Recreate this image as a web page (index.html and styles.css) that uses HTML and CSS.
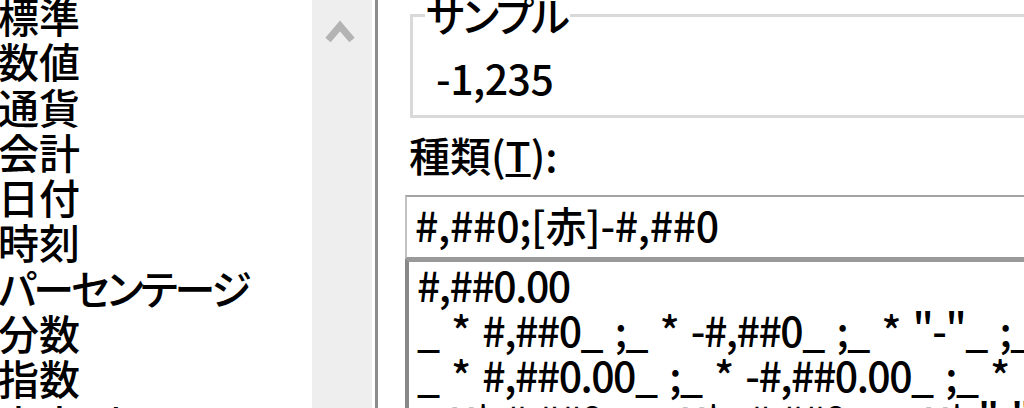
FILE: index.html
```html
<!DOCTYPE html>
<html lang="ja">
<head>
<meta charset="utf-8">
<title>セルの書式設定</title>
<link rel="stylesheet" href="styles.css">
</head>
<body>
<div class="dialog">
  <div class="category">
    <ul class="cat-list">
      <li>標準</li>
      <li>数値</li>
      <li>通貨</li>
      <li>会計</li>
      <li>日付</li>
      <li>時刻</li>
      <li class="kana">パーセンテージ</li>
      <li>分数</li>
      <li>指数</li>
      <li>文字列</li>
    </ul>
    <div class="vscroll">
      <svg class="arrow" width="60" height="50" viewBox="0 0 60 50"><polyline points="16,40 28,26 40,40" fill="none" stroke="#b3b3b3" stroke-width="7" stroke-linejoin="miter"/></svg>
    </div>
    <div class="cat-edge"></div>
  </div>
  <div class="format-panel">
    <div class="sample">
      <span class="legend">サンプル</span>
      <div class="sample-value">-1,235</div>
    </div>
    <div class="type-label">種類(<u>T</u>):</div>
    <div class="type-input">#,##0;[赤]-#,##0</div>
    <ul class="type-list">
      <li>#,##0.00</li>
      <li>_ * #,##0_ ;_ * -#,##0_ ;_ * "-"_ ;_ @_ </li>
      <li>_ * #,##0.00_ ;_ * -#,##0.00_ ;_ * "-"??_ ;_ @_ </li>
      <li>_ ¥* #,##0_ ;_ ¥* -#,##0_ ;_ ¥* "-"_ ;_ @_ </li>
    </ul>
  </div>
</div>
</body>
</html>
```

FILE: styles.css
```css
html, body {
  margin: 0;
  padding: 0;
  background: #ffffff;
  overflow: hidden;
}

body {
  font-family: "Noto Sans CJK JP", "Noto Sans", sans-serif;
  font-size: 41px;
  font-weight: 500;
  color: #000000;
}

.dialog {
  display: flex;
  height: 408px;
  overflow: hidden;
}

/* ---------- category list (left) ---------- */
.category {
  display: flex;
  flex: none;
  width: 378px;
  height: 408px;
}

.cat-list {
  list-style: none;
  flex: none;
  width: 314px;
  margin: -7px 0 0 -2px;
  padding: 0;
  line-height: 45.3px;
  white-space: nowrap;
}

.cat-list .kana {
  font-feature-settings: "palt";
  letter-spacing: -3px;
}

.vscroll {
  flex: none;
  width: 60px;
  background: #eeeeee;
}

.arrow {
  display: block;
}

.cat-edge {
  flex: none;
  width: 3px;
  margin-left: 3px;
  background: #8c8c8c;
}

/* ---------- format panel (right) ---------- */
.format-panel {
  flex: 1;
  min-width: 0;
  padding-top: 14px;
  overflow: hidden;
}

.sample {
  position: relative;
  margin: 0 -30px 0 32px;
  border: 3px solid #d9d9d9;
  padding: 38px 0 15px 0;
}

.legend {
  position: absolute;
  top: -25px;
  left: 12px;
  padding: 0 2px 0 1px;
  background: #ffffff;
  line-height: 45px;
  font-feature-settings: "palt";
  letter-spacing: -2px;
}

.sample-value {
  padding-left: 23px;
  line-height: 45px;
  letter-spacing: -0.5px;
}

.type-label {
  margin: 14px 0 0 31px;
  line-height: 45px;
}

.type-label u {
  text-decoration-thickness: 3px;
  text-underline-offset: 2px;
}

.type-input {
  margin: 18px -30px 0 27px;
  border-style: solid;
  border-width: 2px 0 2px 2px;
  border-color: #a3a3a3 #a3a3a3 #9a9a9a #c2c2c2;
  padding: 5px 0 10px 8px;
  line-height: 45px;
  white-space: nowrap;
  letter-spacing: -0.3px;
}

.type-list {
  list-style: none;
  margin: 0 -30px 0 27px;
  padding: 0 0 0 8px;
  border-top: 3px solid #999999;
  border-left: 4px solid #888888;
  line-height: 45px;
}

.type-list li {
  white-space: pre;
  letter-spacing: -1.5px;
  word-spacing: 5px;
}
```
